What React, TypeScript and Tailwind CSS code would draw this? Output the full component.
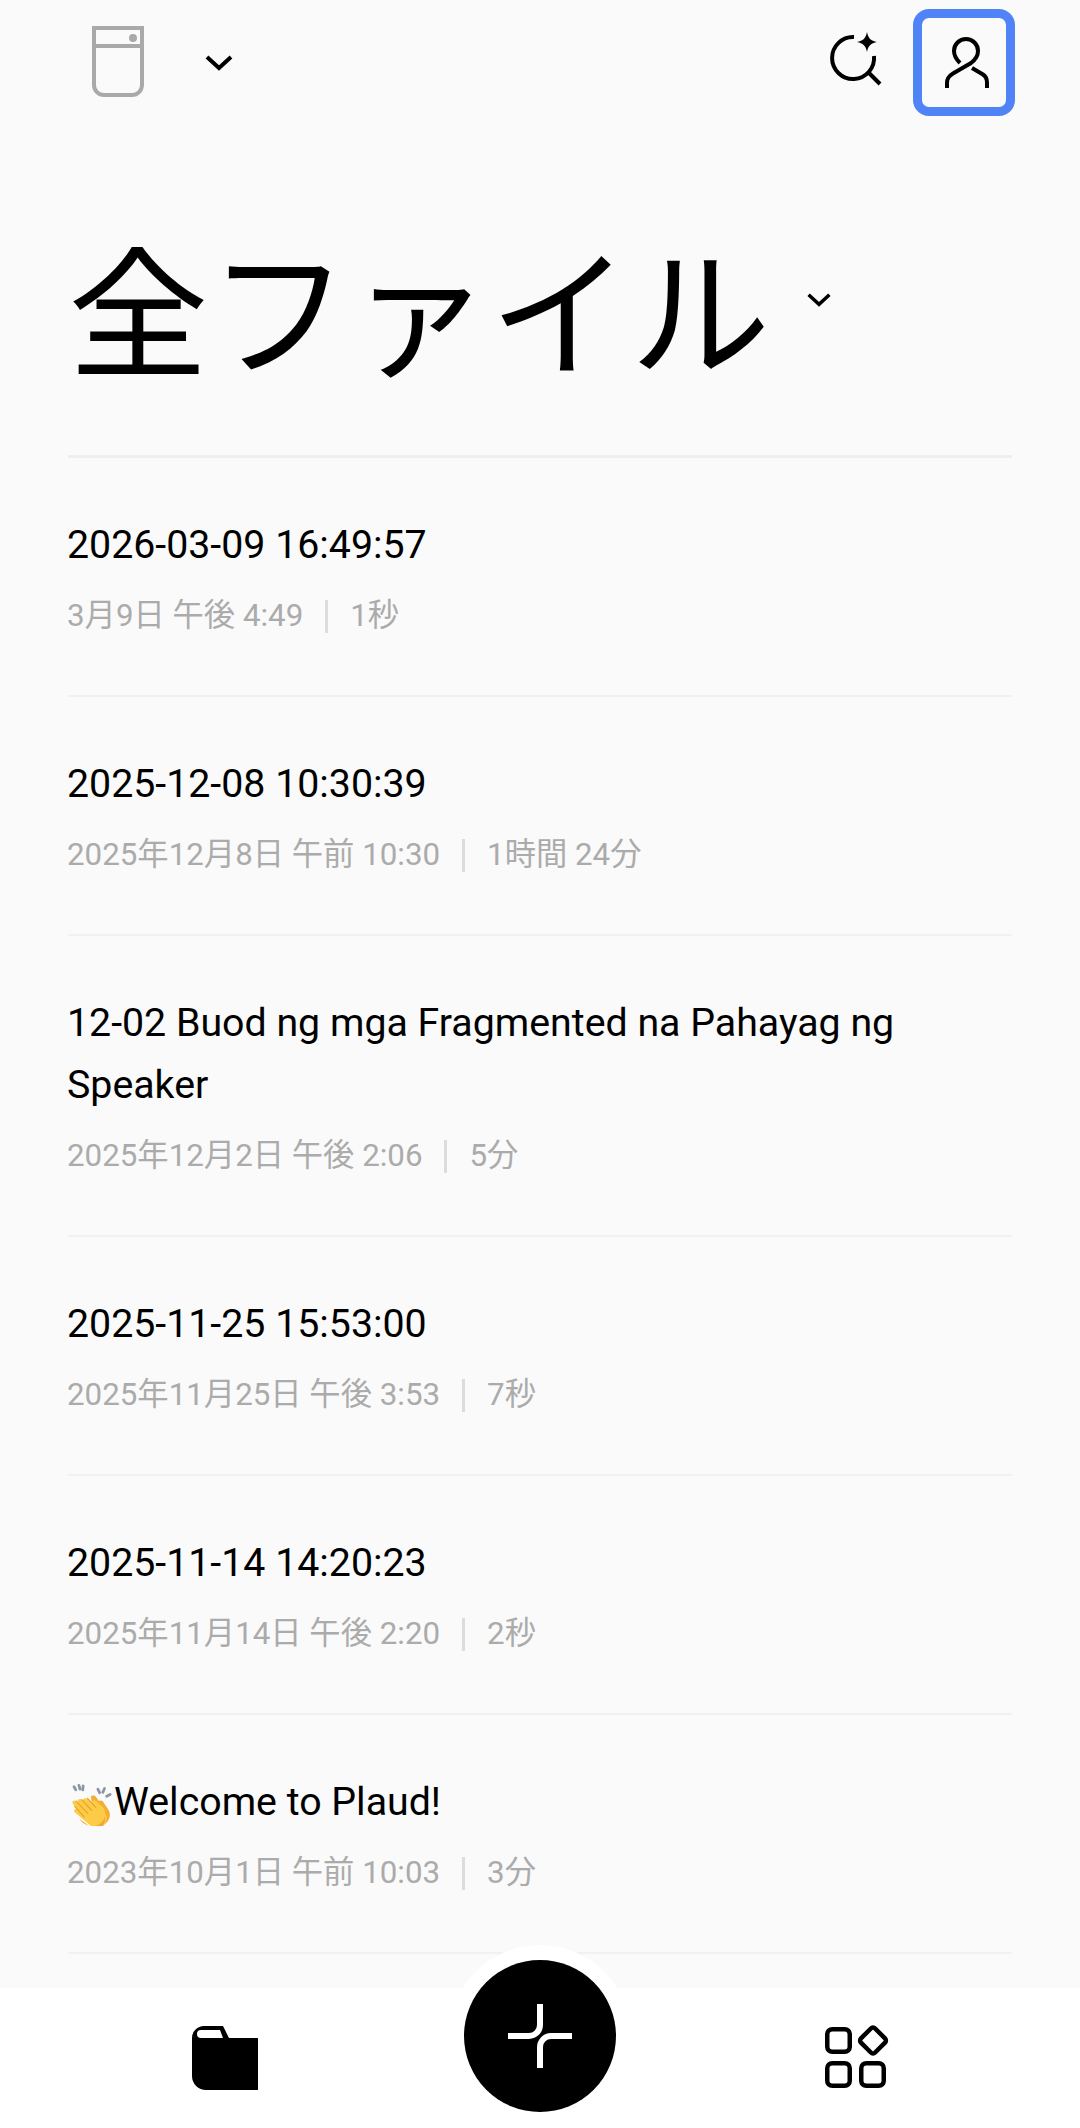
const FONT = "font-['Roboto','Noto_Sans_CJK_JP',sans-serif]";

const rows = [
  { t: "2026-03-09 16:49:57", d: "3月9日 午後 4:49", l: "1秒" },
  { t: "2025-12-08 10:30:39", d: "2025年12月8日 午前 10:30", l: "1時間 24分" },
  { t: "12-02 Buod ng mga Fragmented na Pahayag ng Speaker", d: "2025年12月2日 午後 2:06", l: "5分" },
  { t: "2025-11-25 15:53:00", d: "2025年11月25日 午後 3:53", l: "7秒" },
  { t: "2025-11-14 14:20:23", d: "2025年11月14日 午後 2:20", l: "2秒" },
  { t: "Welcome to Plaud!", d: "2023年10月1日 午前 10:03", l: "3分", clap: true },
];

function Clap() {
  return (
    <svg viewBox="24 22 134 134" className="w-[47px] h-[47px] shrink-0">
      <g stroke="#8d96a6" strokeWidth="8" strokeLinecap="round" fill="none">
        <path d="M44 44l5 9M58 40l3 11M70 42l-1 11M112 51l5 10M131 49l-5 11M147 66l-10 5" />
      </g>
      <path d="M92 72c4-5 12-4 15 1l8 12c3-3 9-2 12 2l16 24c6 10 4 24-5 34-9 9-22 12-34 7z" fill="#f2ae35" />
      <path d="M40 92c-3-6 5-12 10-7l4 4c-2-7 6-13 12-8l3 3c0-6 8-9 13-5l12 10c1-6 8-8 13-4l20 18c4 4 5 9 5 14l4 10c3 12-1 24-11 31-11 7-24 5-35-4L46 117c-5-5 1-12 7-8L40 92z" fill="#fdcb45" />
      <path d="M50 85l33 35M66 81l28 30M82 77l24 26M46 100l27 30" fill="none" stroke="#e7a52f" strokeWidth="3.500" strokeLinecap="round" />
      <path d="M60 136c8 14 30 26 50 18 12-5 20-15 22-26 3 12-1 24-11 31-11 7-24 5-35-4z" fill="#f0a830" />
    </svg>
  );
}

function Row({ r }: { r: (typeof rows)[number] }) {
  return (
    <div className="border-b-2 border-[#f1f1f1] pt-[56px] pb-[56px]">
      <div className="-ml-px flex items-center text-[39.3px] leading-[62px] text-black">
        {r.clap && <Clap />}
        <span>{r.t}</span>
      </div>
      <div className="-ml-px mt-[17px] flex items-center text-[31.3px] leading-[46px] text-[#ababab]">
        <span>{r.d}</span>
        <span className="mx-[22px] h-[33px] w-[3px] bg-[#dcdcdc]" />
        <span>{r.l}</span>
      </div>
    </div>
  );
}

export default function App() {
  return (
    <div className={`${FONT} h-[2128px] w-[1080px] overflow-hidden bg-[#fafafa] flex flex-col`}>
      <header className="flex justify-between pl-[90px] pr-[65px] pt-[9px] h-[130px] shrink-0">
        <div className="flex items-start">
          <svg viewBox="0 0 56 75" className="w-[56px] h-[75px] mt-[15px]">
            <path d="M4 4h48v57a10 10 0 0 1-10 10H14A10 10 0 0 1 4 61z M4 22h48" fill="none" stroke="#a9a9a9" strokeWidth="4" />
            <circle cx="43" cy="14" r="4" fill="#a9a9a9" />
          </svg>
          <svg viewBox="0 0 30 18" className="w-[30px] h-[18px] ml-[58px] mt-[45px]">
            <path d="M3 3l12 11L27 3" fill="none" stroke="#000" strokeWidth="4" />
          </svg>
        </div>
        <div className="flex items-start">
          <svg viewBox="0 0 56 64" className="w-[56px] h-[64px] mt-[23px] mr-[30px]">
            <path d="M27 5A21 21 0 1 0 47 24" fill="none" stroke="#000" strokeWidth="4" />
            <path d="M41 40l12 12" fill="none" stroke="#000" strokeWidth="4" />
            <path d="M40 0c1 6 4 9 10 10-6 1-9 4-10 10-1-6-4-9-10-10 6-1 9-4 10-10z" fill="#000" />
          </svg>
          <div className="w-[102px] h-[107px] rounded-[16px] border-[9px] border-[#5083f6] flex items-center justify-center">
            <svg viewBox="0 0 44 52" className="w-[44px] h-[52px] ml-[5px]">
              <path d="M2 51v-5c0-5 2-7 6-9.500l18-10.500c4-3 7-7 7-12A12 12 0 0 0 9 14c0 5 2 8 6 12" fill="none" stroke="#000" strokeWidth="4" />
              <path d="M27 31l11 6.500c3 2 4 4 4 8v5.500" fill="none" stroke="#000" strokeWidth="4" />
            </svg>
          </div>
        </div>
      </header>

      <div className="flex-1 min-h-0 px-[68px]">
        <div className="flex items-center h-[328px] border-b-[3px] border-[#efefef]">
          <h1 className="text-[140.5px] leading-[180px] font-normal text-black font-['Noto_Sans_CJK_JP',sans-serif] mt-[24px]">全ファイル</h1>
          <svg viewBox="0 0 30 18" className="w-[26px] h-[16px] ml-[35px] mt-[14px]">
            <path d="M3 3l12 11L27 3" fill="none" stroke="#000" strokeWidth="4" />
          </svg>
        </div>
        {rows.map((r) => (
          <Row key={r.t} r={r} />
        ))}
      </div>

      <nav className="relative h-[140px] shrink-0 bg-white flex items-start justify-between pl-[192px] pr-[192px] pt-[38px]">
        <svg viewBox="0 0 66 64" className="w-[66px] h-[64px]">
          <path d="M0 12A12 12 0 0 1 12 0H31L37 12H66V64H14A14 14 0 0 1 0 50Z" fill="#000" />
          <path d="M5 8A4 4 0 0 1 9 4H28L31 12H9A4 4 0 0 1 5 8Z" fill="#fff" />
        </svg>
        <div className="absolute left-[449px] -top-[43px] w-[182px] h-[182px] rounded-full bg-white flex items-center justify-center">
          <div className="w-[152px] h-[152px] rounded-full bg-black flex items-center justify-center">
            <svg viewBox="0 0 64 64" className="w-[64px] h-[64px]">
              <path d="M32 0V21c0 6-5 11-11 11H0M64 32H43c-6 0-11 5-11 11v21" fill="none" stroke="#fff" strokeWidth="6" />
            </svg>
          </div>
        </div>
        <svg viewBox="0 0 63 63" className="w-[63px] h-[63px] overflow-visible">
          <g fill="none" stroke="#000" strokeWidth="4.500">
            <rect x="2.250" y="3.250" width="22.500" height="22.500" rx="5" />
            <rect x="2.250" y="37.250" width="22.500" height="22.500" rx="5" />
            <rect x="36.250" y="37.250" width="22.500" height="22.500" rx="5" />
            <rect x="38" y="4.500" width="20" height="20" rx="3" transform="rotate(45 48 14.500)" />
          </g>
        </svg>
      </nav>
    </div>
  );
}
